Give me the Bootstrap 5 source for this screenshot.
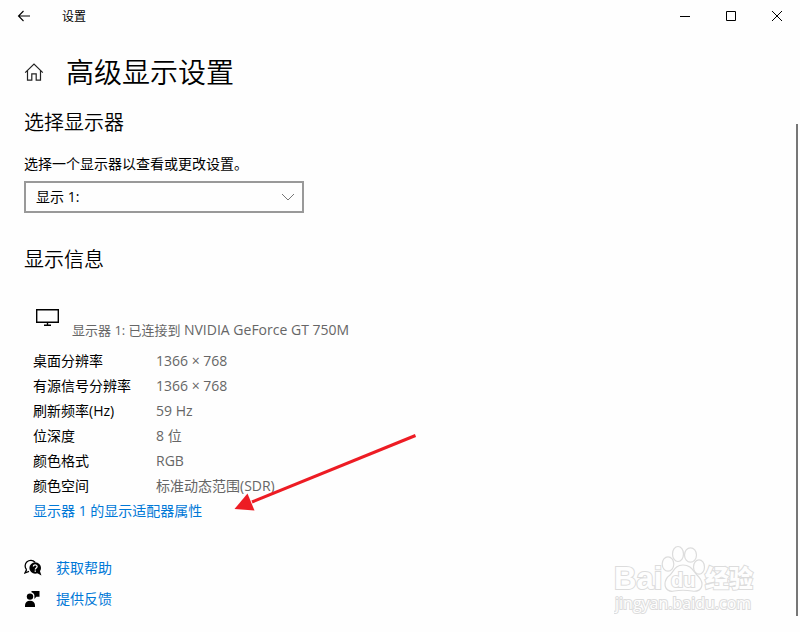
<!DOCTYPE html>
<html lang="zh-CN">
<head>
<meta charset="utf-8">
<meta name="viewport" content="width=device-width, initial-scale=1">
<title>设置</title>
<link href="https://cdn.jsdelivr.net/npm/bootstrap@5.3.0/dist/css/bootstrap.min.css" rel="stylesheet">
<style>
body { font-family: "Open Sans", "Noto Sans CJK SC", sans-serif; font-size: 14px; line-height: 25px; color: #000; background: #fefefe; }
svg { display: block; }
.app { min-height: 100vh; }
.title-bar { height: 32px; font-size: 12px; }
.title-bar button { height: 32px; width: 46px; color: #000; }
.title-bar .back-btn { width: 48px; }
.app-title { padding-left: 14px; }
.content-area { padding: 0 24px; }
.page-head { height: 60px; margin-top: 10px; gap: 22px; }
h1, h2 { font-family: "Noto Sans CJK SC", sans-serif; font-weight: 350; }
h1 { font-size: 28px; line-height: 38px; padding-bottom: 2px; }
h2 { font-size: 20px; line-height: 30px; }
.pick-title { margin-top: 5px; }
.pick-label { margin-top: 14px; line-height: 26px; }
.display-select { width: 280px; height: 32px; margin-top: 4px; border: 2px solid #999; border-radius: 0; background-color: #fefefe; padding: 0 10px; font-size: 14px; line-height: 28px; color: #000;
  background-image: url("data:image/svg+xml,%3Csvg xmlns='http://www.w3.org/2000/svg' viewBox='0 0 14 8'%3E%3Cpath d='M1 1l6 6 6-6' fill='none' stroke='%23777'/%3E%3C/svg%3E"); background-size: 14px 8px; background-position: right 7px center; }
.info-title { margin-top: 31px; }
.device { margin: 35px 0 0 12px; gap: 13px; }
.device-name { font-size: 13px; line-height: 20px; margin-top: 11px; }
.gpu-name { font-size: 14px; }
.soft { color: #666; }
.specs { margin: 8px 0 0 9px; }
.specs th { width: 123px; font-weight: 400; padding: 0; }
.specs td { padding: 0; }
a { color: #0078d7; text-decoration: none; }
.adapter-link { margin-left: 9px; }
.help-links { margin-top: 32px; gap: 6px; }
.help-links a { gap: 14px; }
.scroll-thumb { right: 2px; top: 124px; bottom: 16px; width: 2px; background: #777; }
.pointer { left: 230px; top: 430px; }
.watermark { right: 40px; bottom: 16px; }
.watermark text { font-family: "Liberation Sans", "Noto Sans CJK SC", sans-serif; paint-order: stroke; stroke-width: 2px; }
.watermark .site { font-family: "Open Sans", sans-serif; }
</style>
</head>
<body>
<div class="app position-relative">
  <header class="title-bar d-flex align-items-center">
    <button class="back-btn btn p-0 border-0 rounded-0 d-flex align-items-center justify-content-center" aria-label="返回">
      <svg width="14" height="12" viewBox="0 0 14 12" fill="none" stroke="#000" stroke-width="1.1"><path d="M13 6H1.5M6.5 1l-5 5 5 5"/></svg>
    </button>
    <span class="app-title me-auto">设置</span>
    <button class="btn p-0 border-0 rounded-0 d-flex align-items-center justify-content-center" aria-label="最小化">
      <svg width="10" height="10" viewBox="0 0 10 10" stroke="#000"><path d="M0 5.5h10"/></svg>
    </button>
    <button class="btn p-0 border-0 rounded-0 d-flex align-items-center justify-content-center" aria-label="最大化">
      <svg width="10" height="10" viewBox="0 0 10 10" fill="none" stroke="#000"><path d="M.5.5h9v9h-9z"/></svg>
    </button>
    <button class="btn p-0 border-0 rounded-0 d-flex align-items-center justify-content-center" aria-label="关闭">
      <svg width="10" height="10" viewBox="0 0 10 10" stroke="#000"><path d="M0 0l10 10M10 0L0 10"/></svg>
    </button>
  </header>

  <main class="content-area">
    <div class="page-head d-flex align-items-center">
      <a href="#" aria-label="主页"><svg width="20" height="18" viewBox="0 0 20 18" fill="none" stroke="#222" stroke-width="1.2"><path d="M1.2 9.6L10 1l8.8 8.6M3.5 7.8v9.4h4.3v-6.3h4.4v6.3h4.3V7.8"/></svg></a>
      <h1 class="m-0">高级显示设置</h1>
    </div>

    <section>
      <h2 class="pick-title mb-0">选择显示器</h2>
      <label class="pick-label d-block" for="display">选择一个显示器以查看或更改设置。</label>
      <select class="display-select form-select" id="display"><option>显示 1:</option></select>
    </section>

    <section>
      <h2 class="info-title mb-0">显示信息</h2>
      <div class="device d-flex align-items-start">
        <svg width="23" height="17" viewBox="0 0 23 17" fill="none" stroke="#000"><path stroke-width="1.4" d="M.7.7h21.6v12.6H.7z"/><path stroke-width="1.4" d="M11.5 13v3M8 16.2h7"/></svg>
        <span class="device-name soft">显示器 1: 已连接到 <span class="gpu-name">NVIDIA GeForce GT 750M</span></span>
      </div>
      <table class="specs">
        <tbody>
          <tr><th scope="row">桌面分辨率</th><td class="soft">1366 × 768</td></tr>
          <tr><th scope="row">有源信号分辨率</th><td class="soft">1366 × 768</td></tr>
          <tr><th scope="row">刷新频率(Hz)</th><td class="soft">59 Hz</td></tr>
          <tr><th scope="row">位深度</th><td class="soft">8 位</td></tr>
          <tr><th scope="row">颜色格式</th><td class="soft">RGB</td></tr>
          <tr><th scope="row">颜色空间</th><td class="soft">标准动态范围(SDR)</td></tr>
        </tbody>
      </table>
      <a class="adapter-link d-inline-block" href="#">显示器 1 的显示适配器属性</a>
    </section>

    <nav class="help-links d-flex flex-column align-items-start" aria-label="帮助">
      <a class="d-flex align-items-center" href="#">
        <svg width="18" height="18" viewBox="0 0 18 18"><path d="M2.6 10.8A5.2 5.2 0 1 1 11 3.2M2.6 10.6L1 14l4-1.6" fill="none" stroke="#000" stroke-width="1.3"/><circle cx="11.2" cy="9" r="5.8"/><path d="M13 14l4.4 2.6-1.6-5z"/><path d="M9.4 7.6c0-2.4 3.7-2.2 3.7 0 0 1.4-1.8 1.4-1.8 2.8" fill="none" stroke="#fff" stroke-width="1.3"/><path d="M10.6 11.4H12v1.4h-1.4z" fill="#fff"/></svg>
        <span>获取帮助</span>
      </a>
      <a class="d-flex align-items-center" href="#">
        <svg width="18" height="18" viewBox="0 0 18 18"><circle cx="6" cy="6.6" r="3.2"/><path d="M1 17v-1.6c0-3 2-4.7 5-4.7s5 1.7 5 4.7V17z"/><path d="M7.500 1H15.500v5.700h-3.200L10.400 9V5.500C10.400 4 9 2.600 7.500 2.200z"/></svg>
        <span>提供反馈</span>
      </a>
    </nav>
  </main>

  <div class="scroll-thumb position-absolute"></div>

  <svg class="pointer position-absolute pe-none" width="190" height="85" viewBox="0 0 190 85" fill="#ed1c24"><path d="M185.500 5.500L22 72" stroke="#ed1c24" stroke-width="3"/><path d="M4.500 79L17.500 63.500 24.500 80.500z"/></svg>

  <svg class="watermark position-absolute pe-none" width="146" height="72" viewBox="0 0 146 72" fill="#fefefe" stroke="#dcdcdc" stroke-width="1.2">
    <text x="0" y="45" font-size="31" font-weight="700">Bai</text>
    <ellipse cx="54" cy="20" rx="5.800" ry="7.200"/><ellipse cx="64" cy="10" rx="5.500" ry="7.500"/><ellipse cx="76.500" cy="11" rx="6" ry="7.200"/><ellipse cx="85" cy="23" rx="5.500" ry="7.200"/>
    <path d="M69 21c-8 0-9 6-13 10-4 3-5 5-5 9 0 6 5 8 9 7 6-1 12-1 18 0 5 1 10-1 10-7 0-4-2-6-5-9-4-4-6-10-14-10z"/>
    <text x="57" y="43" font-size="20" font-weight="700">du</text>
    <text x="91" y="43" font-size="24" font-weight="900">经验</text>
    <text class="site" x="1" y="65" font-size="16">jingyan.baidu.com</text>
  </svg>
</div>
<script src="https://cdn.jsdelivr.net/npm/bootstrap@5.3.0/dist/js/bootstrap.bundle.min.js"></script>
</body>
</html>
